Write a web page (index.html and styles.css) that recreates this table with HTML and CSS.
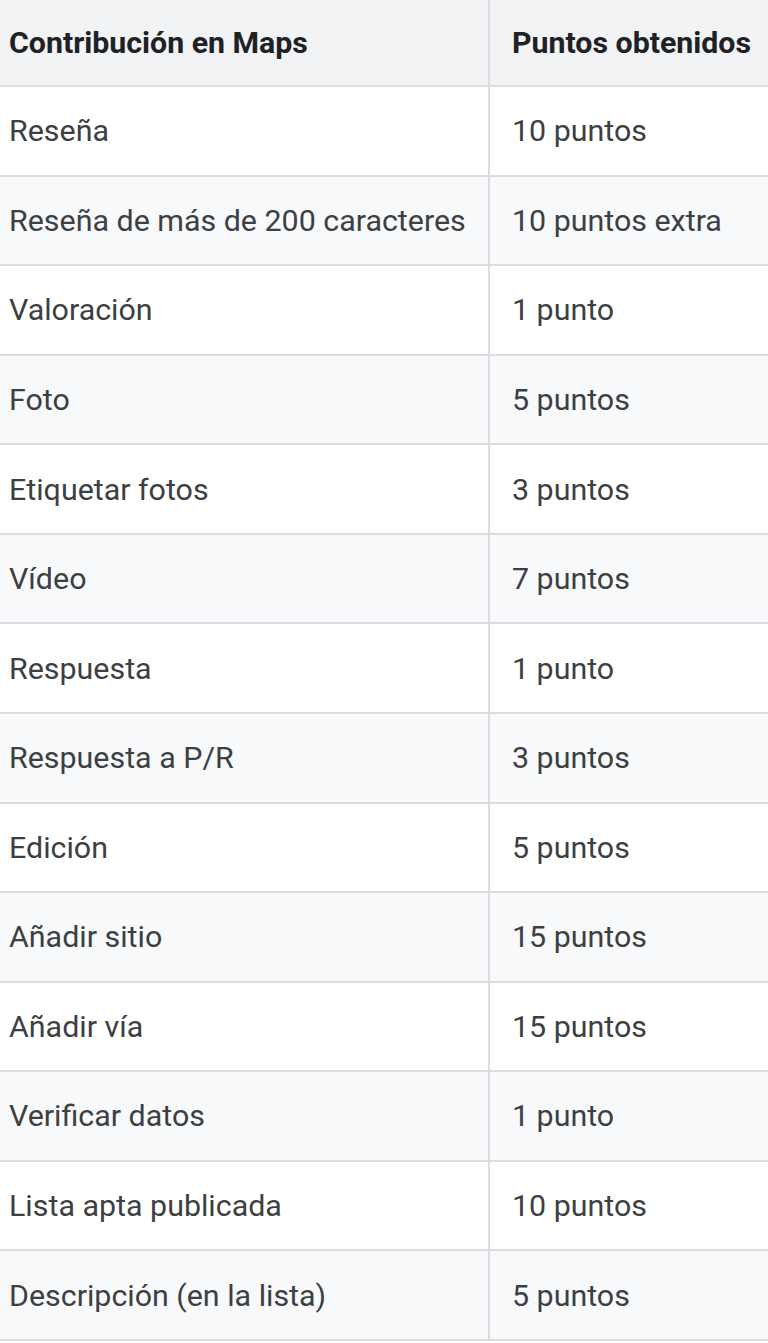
FILE: index.html
```html
<!DOCTYPE html>
<html lang="es">
<head>
<meta charset="utf-8">
<title>Contribución en Maps</title>
<link rel="stylesheet" href="styles.css">
</head>
<body>
<table class="points">
  <thead>
    <tr><th class="c1">Contribución en Maps</th><th class="c2">Puntos obtenidos</th></tr>
  </thead>
  <tbody>
    <tr><td class="c1">Reseña</td><td class="c2">10 puntos</td></tr>
    <tr><td class="c1">Reseña de más de 200 caracteres</td><td class="c2">10 puntos extra</td></tr>
    <tr><td class="c1">Valoración</td><td class="c2">1 punto</td></tr>
    <tr><td class="c1">Foto</td><td class="c2">5 puntos</td></tr>
    <tr><td class="c1">Etiquetar fotos</td><td class="c2">3 puntos</td></tr>
    <tr><td class="c1">Vídeo</td><td class="c2">7 puntos</td></tr>
    <tr><td class="c1">Respuesta</td><td class="c2">1 punto</td></tr>
    <tr><td class="c1">Respuesta a P/R</td><td class="c2">3 puntos</td></tr>
    <tr><td class="c1">Edición</td><td class="c2">5 puntos</td></tr>
    <tr><td class="c1">Añadir sitio</td><td class="c2">15 puntos</td></tr>
    <tr><td class="c1">Añadir vía</td><td class="c2">15 puntos</td></tr>
    <tr><td class="c1">Verificar datos</td><td class="c2">1 punto</td></tr>
    <tr><td class="c1">Lista apta publicada</td><td class="c2">10 puntos</td></tr>
    <tr><td class="c1">Descripción (en la lista)</td><td class="c2">5 puntos</td></tr>
  </tbody>
</table>
</body>
</html>
```
FILE: styles.css
```css
html, body {
  margin: 0;
  padding: 0;
  background: #ffffff;
}
body {
  font-family: Roboto, "Liberation Sans", Arial, sans-serif;
  color: #3c4043;
}
.points {
  border-collapse: collapse;
  width: 780px;
  table-layout: fixed;
}
.points th,
.points td {
  box-sizing: border-box;
  text-align: left;
  vertical-align: middle;
  border-bottom: 2px solid #dadce0;
  padding: 0;
  white-space: nowrap;
}
.points th {
  height: 86px;
  background: #f1f3f4;
  color: #202124;
  font-weight: 700;
  font-size: 30.3px;
}
.points td {
  height: 89.57px;
  font-size: 30.4px;
  font-weight: 400;
}
.points tbody tr:nth-child(even) td {
  background: #f8f9fa;
}
.points .c1 {
  width: 489px;
  padding-left: 9px;
  border-right: 2px solid #dadce0;
}
.points .c2 {
  padding-left: 22px;
}
```
